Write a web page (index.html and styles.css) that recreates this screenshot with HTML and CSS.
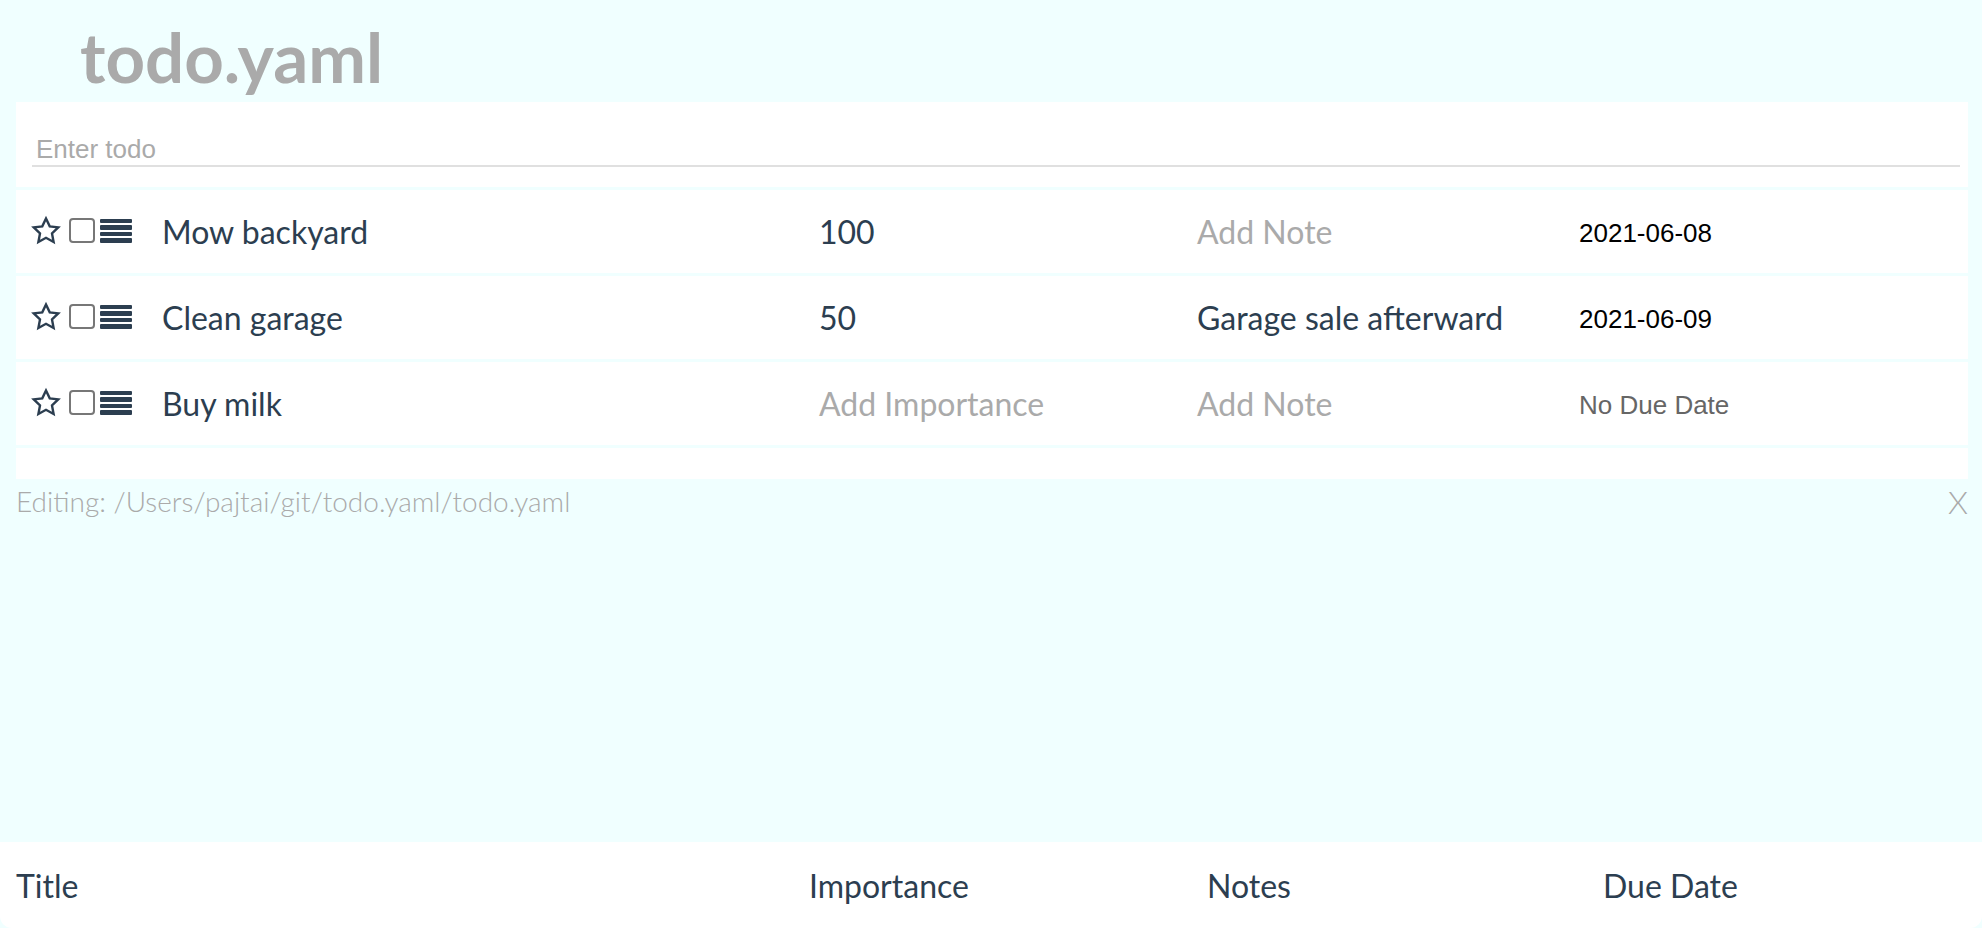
FILE: index.html
```html
<!DOCTYPE html>
<html lang="en">
<head>
    <meta charset="UTF-8">
    <title>todo.yaml</title>
    <link rel="stylesheet" href="styles.css">
</head>
<body>
<div class="app">
    <header class="top">
        <h1>todo.yaml</h1>
    </header>

    <div class="panel">
        <div class="entry">
            <input type="text" placeholder="Enter todo">
        </div>
        <ul class="todos">
            <li class="todo">
                <div class="icons">
                    <svg class="star" viewBox="0 0 24 24"><path d="M12 2.6l2.8 5.9 6.4.8-4.7 4.5 1.2 6.4L12 17.1l-5.7 3.1 1.2-6.4-4.7-4.5 6.4-.8z"/></svg>
                    <span class="check"></span>
                    <span class="lines"><i></i><i></i><i></i><i></i></span>
                </div>
                <div class="title">Mow backyard</div>
                <div class="importance">100</div>
                <div class="note empty">Add Note</div>
                <div class="due">2021-06-08</div>
            </li>
            <li class="todo">
                <div class="icons">
                    <svg class="star" viewBox="0 0 24 24"><path d="M12 2.6l2.8 5.9 6.4.8-4.7 4.5 1.2 6.4L12 17.1l-5.7 3.1 1.2-6.4-4.7-4.5 6.4-.8z"/></svg>
                    <span class="check"></span>
                    <span class="lines"><i></i><i></i><i></i><i></i></span>
                </div>
                <div class="title">Clean garage</div>
                <div class="importance">50</div>
                <div class="note">Garage sale afterward</div>
                <div class="due">2021-06-09</div>
            </li>
            <li class="todo">
                <div class="icons">
                    <svg class="star" viewBox="0 0 24 24"><path d="M12 2.6l2.8 5.9 6.4.8-4.7 4.5 1.2 6.4L12 17.1l-5.7 3.1 1.2-6.4-4.7-4.5 6.4-.8z"/></svg>
                    <span class="check"></span>
                    <span class="lines"><i></i><i></i><i></i><i></i></span>
                </div>
                <div class="title">Buy milk</div>
                <div class="importance empty">Add Importance</div>
                <div class="note empty">Add Note</div>
                <div class="due none">No Due Date</div>
            </li>
        </ul>
    </div>

    <div class="status">
        <span>Editing: /Users/pajtai/git/todo.yaml/todo.yaml</span>
        <span class="close">X</span>
    </div>

    <div class="spacer"></div>

    <footer class="columns">
        <div>Title</div>
        <div>Importance</div>
        <div>Notes</div>
        <div>Due Date</div>
    </footer>
</div>
</body>
</html>
```

FILE: styles.css
```css
html,
body {
    margin: 0;
    padding: 0;
    height: 100%;
}

body {
    background-color: #f0ffff;
    font-family: Lato, "Noto Sans", sans-serif;
    color: #2c3e50;
}

.app {
    display: flex;
    flex-direction: column;
    height: 100%;
}

.top {
    height: 102px;
    padding-left: 80px;
    box-sizing: border-box;
}

.top h1 {
    margin: 0;
    font-size: 69px;
    font-weight: 700;
    color: #aaa;
    line-height: 102px;
    position: relative;
    top: 6px;
}

.panel {
    background-color: #fff;
    margin: 0 14px 0 16px;
    padding-bottom: 31px;
}

.entry {
    padding: 31px 8px 20px 16px;
}

.entry input {
    display: block;
    width: 100%;
    box-sizing: border-box;
    height: 34px;
    border: none;
    border-bottom: 2px solid #e0e0e0;
    padding: 0 4px;
    font-family: "Liberation Sans", Arial, sans-serif;
    font-size: 26px;
    color: #333;
    outline: none;
    background: transparent;
}

.entry input::placeholder {
    color: #aaa;
}

.todos {
    list-style: none;
    margin: 0;
    padding: 0;
}

.todo {
    display: grid;
    grid-template-columns: 130px 657px 378px 382px 1fr;
    align-items: center;
    height: 83px;
    padding-left: 16px;
    border-top: 3px solid #f0ffff;
    font-size: 32px;
}

.todo:last-child {
    border-bottom: 3px solid #f0ffff;
}

.icons {
    display: flex;
    align-items: center;
    gap: 7px;
    position: relative;
    top: -1px;
}

.star {
    width: 32px;
    height: 32px;
    margin-left: -2px;
    fill: none;
    stroke: #2c3e50;
    stroke-width: 1.8;
}

.check {
    width: 22px;
    height: 21px;
    border: 2px solid #777;
    border-radius: 4px;
    margin-right: -2px;
}

.lines {
    display: flex;
    flex-direction: column;
    gap: 2px;
    width: 32px;
}

.lines i {
    display: block;
    height: 4.5px;
    background-color: #2c3e50;
    border-radius: 1px;
}

.empty {
    color: #aaa;
}

.due {
    font-family: "Liberation Sans", Arial, sans-serif;
    font-size: 26px;
    color: #000;
    position: relative;
    top: 2px;
}

.due.none {
    color: #666;
}

.status {
    display: flex;
    justify-content: space-between;
    align-items: center;
    height: 44px;
    padding: 0 14px 0 16px;
    font-size: 28px;
    font-weight: 300;
    color: #aaa;
}

.status .close {
    font-size: 32px;
}

.spacer {
    flex: 1;
}

.columns {
    display: grid;
    grid-template-columns: 793px 398px 396px 1fr;
    align-items: center;
    height: 86px;
    padding-left: 16px;
    background-color: #fff;
    border-radius: 0 0 12px 12px;
    font-size: 32px;
}
```
